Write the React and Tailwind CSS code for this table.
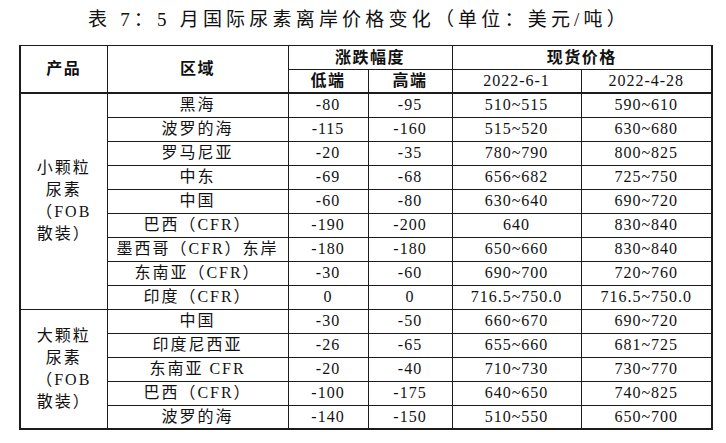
import React from "react";

const rows1 = [
  ["黑海", "-80", "-95", "510~515", "590~610"],
  ["波罗的海", "-115", "-160", "515~520", "630~680"],
  ["罗马尼亚", "-20", "-35", "780~790", "800~825"],
  ["中东", "-69", "-68", "656~682", "725~750"],
  ["中国", "-60", "-80", "630~640", "690~720"],
  ["巴西（CFR）", "-190", "-200", "640", "830~840"],
  ["墨西哥（CFR）东岸", "-180", "-180", "650~660", "830~840"],
  ["东南亚（CFR）", "-30", "-60", "690~700", "720~760"],
  ["印度（CFR）", "0", "0", "716.5~750.0", "716.5~750.0"],
];

const rows2 = [
  ["中国", "-30", "-50", "660~670", "690~720"],
  ["印度尼西亚", "-26", "-65", "655~660", "681~725"],
  ["东南亚 CFR", "-20", "-40", "710~730", "730~770"],
  ["巴西（CFR）", "-100", "-175", "640~650", "740~825"],
  ["波罗的海", "-140", "-150", "510~550", "650~700"],
];

const cell = "border border-[#1c1c1c] p-0 text-center align-middle";
const zh = "text-[16px] tracking-[2px]";
const num = "text-[16px] tracking-[1px]";

function Group({ label, rows }) {
  return rows.map((r, i) => (
    <tr key={i} className="h-[24px]">
      {i === 0 && (
        <td rowSpan={rows.length} className={`${cell} ${zh} leading-[22px]`}>
          {label[0]}
          <br />
          {label[1]}
          <br />
          {label[2]}
          <br />
          {label[3]}
        </td>
      )}
      <td className={`${cell} ${zh} leading-[22px]`}>{r[0]}</td>
      <td className={`${cell} ${num} leading-[22px]`}>{r[1]}</td>
      <td className={`${cell} ${num} leading-[22px]`}>{r[2]}</td>
      <td className={`${cell} ${num} leading-[22px]`}>{r[3]}</td>
      <td className={`${cell} ${num} leading-[22px]`}>{r[4]}</td>
    </tr>
  ));
}

export default function App() {
  return (
    <div
      className="w-[726px] h-[443px] bg-white text-[#111] overflow-hidden"
      style={{ fontFamily: '"Liberation Serif", "Noto Sans CJK SC", serif' }}
    >
      <div className="h-[45px] pl-[88px] pt-[7px] text-[19px] leading-[25px] tracking-[4.2px] whitespace-nowrap">
        表 7：5 月国际尿素离岸价格变化（单位：美元/吨）
      </div>
      <table className="ml-[19px] table-fixed border-collapse border-t border-x-2 border-b-2 border-[#1c1c1c] w-[692px]">
        <colgroup>
          <col className="w-[87px]" />
          <col className="w-[181px]" />
          <col className="w-[80px]" />
          <col className="w-[84px]" />
          <col className="w-[129px]" />
          <col className="w-[131px]" />
        </colgroup>
        <thead>
          <tr className="h-[24px]">
            <th rowSpan={2} className={`${cell} border-b-2 text-[16px] font-bold tracking-[1.5px]`}>
              产品
            </th>
            <th rowSpan={2} className={`${cell} border-b-2 text-[16px] font-bold tracking-[1.5px]`}>
              区域
            </th>
            <th colSpan={2} className={`${cell} text-[16px] font-bold tracking-[1.5px] leading-[22px]`}>
              涨跌幅度
            </th>
            <th colSpan={2} className={`${cell} text-[16px] font-bold tracking-[1.5px] leading-[22px]`}>
              现货价格
            </th>
          </tr>
          <tr className="h-[23px]">
            <th className={`${cell} border-b-2 text-[16px] font-bold tracking-[1.5px] leading-[22px]`}>低端</th>
            <th className={`${cell} border-b-2 text-[16px] font-bold tracking-[1.5px] leading-[22px]`}>高端</th>
            <th className={`${cell} border-b-2 ${num} font-normal leading-[22px]`}>2022-6-1</th>
            <th className={`${cell} border-b-2 ${num} font-normal leading-[22px]`}>2022-4-28</th>
          </tr>
        </thead>
        <tbody>
          <Group label={["小颗粒", "尿素", "（FOB", "散装）"]} rows={rows1} />
          <Group label={["大颗粒", "尿素", "（FOB", "散装）"]} rows={rows2} />
        </tbody>
      </table>
    </div>
  );
}
